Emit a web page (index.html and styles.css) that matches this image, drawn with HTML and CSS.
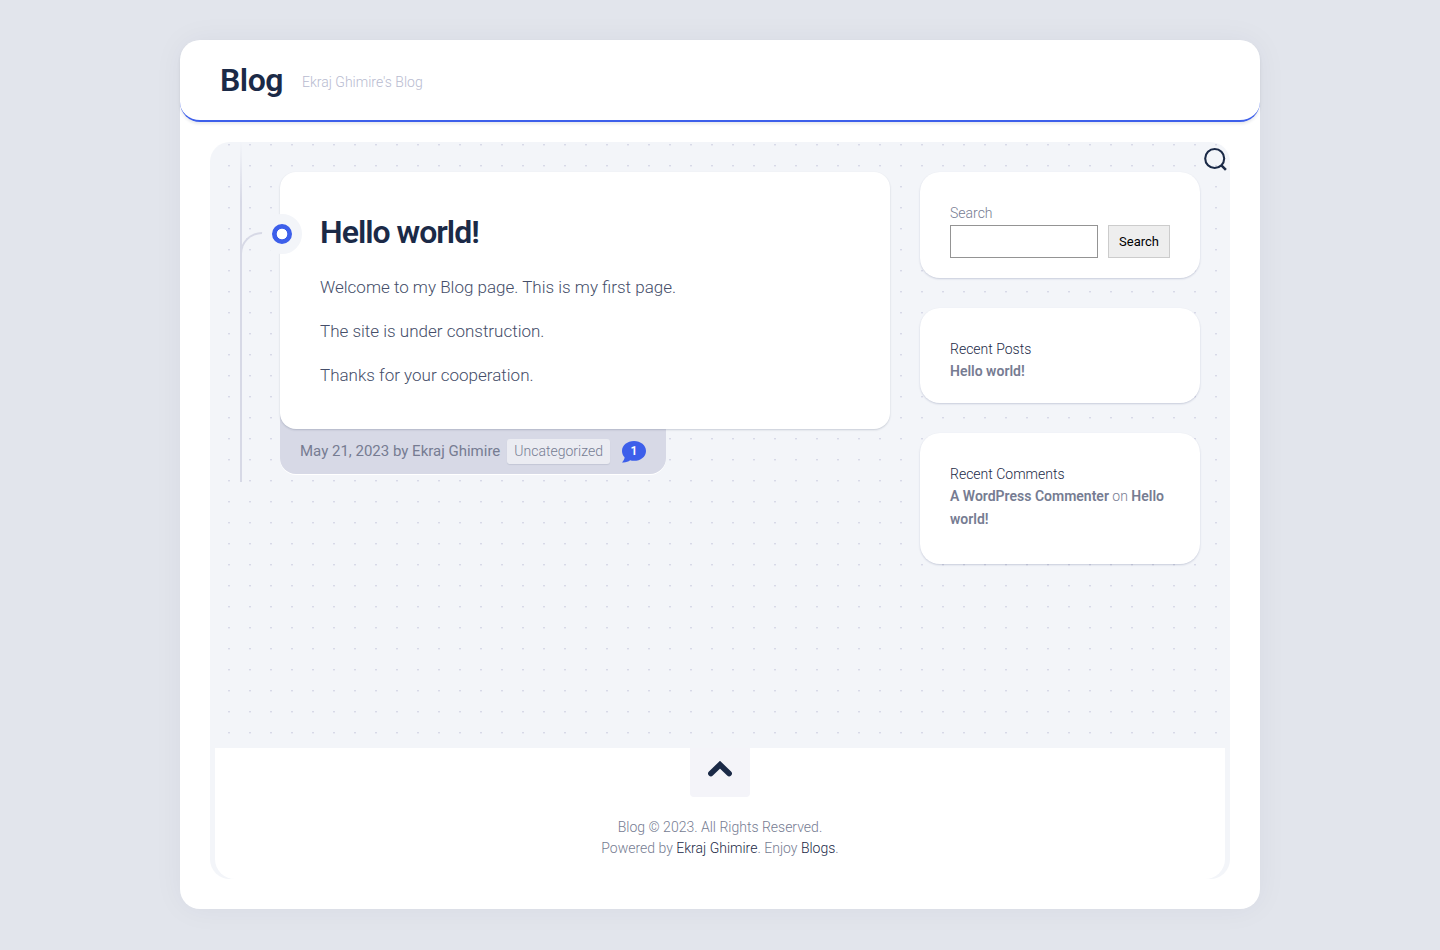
FILE: index.html
```
<!DOCTYPE html>
<html lang="en">
<head>
<meta charset="utf-8">
<meta name="viewport" content="width=device-width, initial-scale=1">
<title>Blog</title>
<link rel="stylesheet" href="styles.css">
</head>
<body>
<div class="wrapper" id="top">
  <header class="header">
    <h1 class="site-title"><a href="#">Blog</a></h1>
    <p class="site-description">Ekraj Ghimire's Blog</p>
  </header>
  <div class="content">
    <button class="search-toggle" type="button" aria-label="Open search">
      <svg width="24" height="24" viewBox="0 0 24 24" fill="none" stroke="currentColor" stroke-width="2.1"><circle cx="11.7" cy="11.5" r="9.5"/><path d="M18.4 18.3L22.9 22.8" stroke-width="2.6"/></svg>
    </button>
    <div class="columns">
      <main class="posts">
        <article class="post">
          <div class="card">
            <h2 class="post-title"><a href="#">Hello world!</a></h2>
            <p>Welcome to my Blog page. This is my first page.</p>
            <p>The site is under construction.</p>
            <p>Thanks for your cooperation.</p>
          </div>
          <div class="meta">
            <span class="byline">May 21, 2023 by <a href="#">Ekraj Ghimire</a></span>
            <a class="category" href="#">Uncategorized</a>
            <a class="comments" href="#" aria-label="Comments: 1">
              <svg width="24" height="22" viewBox="0 0 24 22" fill="currentColor"><path d="M12 0C18.6 0 24 4.2 24 9.9S18.6 19.8 12 19.8C10.6 19.8 9.3 19.6 8.1 19.2C6.2 20.7 3.4 21.8 0 21.4C1.4 20 2.5 18.1 2.6 16.2C1 14.5 0 12.3 0 9.9C0 4.2 5.4 0 12 0Z"/></svg>
              <span class="count">1</span>
            </a>
          </div>
        </article>
      </main>
      <aside class="sidebar">
        <form class="widget" onsubmit="return false">
          <label class="search-label" for="search">Search</label>
          <div class="search-row">
            <input class="search-input" id="search" type="search">
            <button class="search-button" type="submit">Search</button>
          </div>
        </form>
        <section class="widget">
          <h2 class="widget-title">Recent Posts</h2>
          <ul class="list"><li><a href="#">Hello world!</a></li></ul>
        </section>
        <section class="widget">
          <h2 class="widget-title">Recent Comments</h2>
          <ol class="list list-comments"><li><a href="#">A WordPress Commenter</a> on <a href="#">Hello world!</a></li></ol>
        </section>
      </aside>
    </div>
    <footer class="footer">
      <a class="to-top" href="#top" aria-label="Back to top">
        <svg width="24" height="16" viewBox="0 0 24 16" fill="none" stroke="currentColor" stroke-width="5.6" stroke-linecap="round" stroke-linejoin="miter"><path d="M2.9 12.6L12 3.7L21.1 12.6"/></svg>
      </a>
      <p class="copyright">Blog © 2023. All Rights Reserved.</p>
      <p class="copyright">Powered by <a href="#">Ekraj Ghimire</a>. Enjoy <a href="#">Blogs</a>.</p>
    </footer>
  </div>
</div>
</body>
</html>
```
FILE: styles.css
```
* { box-sizing: border-box; }
body {
  margin: 0;
  padding: 40px;
  background: #e2e5ec;
  color: #767c92;
  font: 300 14px/21px Roboto, sans-serif;
}
h1, h2, p, ul, ol { margin: 0; padding: 0; }
a { color: inherit; text-decoration: none; }
svg { display: block; }

.wrapper {
  max-width: 1080px;
  margin: 0 auto;
  padding-bottom: 30px;
  background: #fff;
  border-radius: 20px;
  box-shadow: 0 0 30px rgba(29, 43, 73, 0.05);
}
.header {
  display: flex;
  align-items: center;
  gap: 19px;
  padding: 20px 40px;
  border-bottom: 2px solid #3d5fea;
  border-radius: 20px;
  box-shadow: 0 2px 3px rgba(29, 43, 73, 0.1);
}
.site-title {
  color: #1b2a47;
  font-size: 32px;
  font-weight: 600;
  line-height: 40px;
  letter-spacing: -0.5px;
}
.site-description { padding-top: 4px; color: #b8bbd0; }

.content {
  position: relative;
  margin: 20px 30px 0;
  border-radius: 20px;
  overflow: hidden;
  background: #f3f5f9 url("data:image/svg+xml,%3Csvg xmlns='http://www.w3.org/2000/svg' width='21' height='21'%3E%3Cpath d='M18 2h2v1h-2z' fill='%23d7d9e7'/%3E%3Cpath d='M18 3h2v1h-2z' fill='%23e8e9f2'/%3E%3C/svg%3E");
}
.search-toggle {
  position: absolute;
  top: 5px;
  right: 3px;
  padding: 0;
  border: 0;
  background: none;
  color: #1b2a47;
}
.columns {
  display: grid;
  grid-template-columns: minmax(0, 1fr) 280px;
  align-items: start;
  gap: 30px;
  min-height: 606px;
  padding: 0 30px;
}
.posts { position: relative; padding: 30px 0 8px 40px; }
.posts::before {
  content: "";
  position: absolute;
  top: 0;
  bottom: 0;
  left: 0;
  width: 2px;
  background: linear-gradient(rgba(215, 217, 230, 0), #d7d9e6 60px);
}
.post { position: relative; }
.post::before {
  content: "";
  position: absolute;
  top: 60px;
  left: -40px;
  width: 22px;
  height: 22px;
  border: solid #d7d9e6;
  border-width: 2px 0 0 2px;
  border-top-left-radius: 22px;
}
.card {
  position: relative;
  padding: 40px;
  background: #fff;
  border-radius: 16px;
  box-shadow: 0 1px 2px rgba(29, 43, 73, 0.2);
  color: #454e69;
  font-size: 17px;
  line-height: 28px;
}
.card::before {
  content: "";
  position: absolute;
  top: 42px;
  left: -18px;
  width: 20px;
  height: 20px;
  box-sizing: content-box;
  border: 10px solid #f3f5f9;
  border-radius: 50%;
  background: radial-gradient(circle, #fff 35%, #3d5fea 40%);
}
.card p + p { margin-top: 16px; }
.post-title {
  margin-bottom: 21px;
  color: #1b2a47;
  font-size: 32px;
  font-weight: 600;
  line-height: 40px;
  letter-spacing: -1px;
}
.meta {
  display: flex;
  align-items: center;
  width: fit-content;
  margin-top: -20px;
  padding: 30px 20px 10px;
  background: #d7d9e6;
  border-radius: 0 0 16px 16px;
  box-shadow: 0 1px 0 #fff;
  color: #767c92;
  font-size: 15px;
  line-height: 25px;
}
.byline { font-weight: 400; }
.category {
  margin: 0 12px 0 7px;
  padding: 0 7px;
  background: #ebecf2;
  border-radius: 3px;
  box-shadow: 0 1px 1px rgba(29, 43, 73, 0.1);
  font-size: 14px;
}
.comments { position: relative; color: #3d5fea; }
.count {
  position: absolute;
  inset: 0;
  color: #fff;
  font-size: 12px;
  font-weight: 600;
  line-height: 21px;
  text-align: center;
}

.sidebar {
  display: grid;
  grid-template-columns: minmax(0, 1fr);
  gap: 30px;
  padding: 30px 0;
}
.widget {
  padding: 30px 30px 20px;
  background: #fff;
  border-radius: 20px;
  box-shadow: 0 1px 2px rgba(29, 43, 99, 0.2);
}
.search-label { display: block; line-height: 23px; }
.search-row { display: flex; gap: 10px; }
.search-input {
  flex: 1;
  min-width: 0;
  height: 33px;
  padding: 0 8px;
  border: 1px solid #949494;
  border-radius: 0;
  background: #fff;
  font: inherit;
  appearance: none;
}
.search-button {
  height: 33px;
  padding: 0 10px;
  border: 1px solid #ccc;
  background: #eee;
  color: #000;
  font: 400 13px Roboto, sans-serif;
}
.widget-title {
  color: #1b2a47;
  font-size: 14px;
  font-weight: 300;
  line-height: 22px;
}
.list { list-style: none; line-height: 23px; }
.list a { font-weight: 600; }
.list-comments { margin-bottom: 13px; }

.footer {
  margin: 0 5px;
  padding-bottom: 20px;
  background: #fff;
  border-radius: 0 0 20px 20px;
  text-align: center;
}
.to-top {
  display: flex;
  justify-content: center;
  width: 60px;
  margin: 0 auto 20px;
  padding: 13px 0 20px;
  background: #f4f4f9;
  border-radius: 0 0 4px 4px;
  color: #1b2a47;
}
.copyright a { color: #1b2a47; }

@media (max-width: 800px) {
  body { padding: 10px; }
  .columns { grid-template-columns: minmax(0, 1fr); }
}
```
